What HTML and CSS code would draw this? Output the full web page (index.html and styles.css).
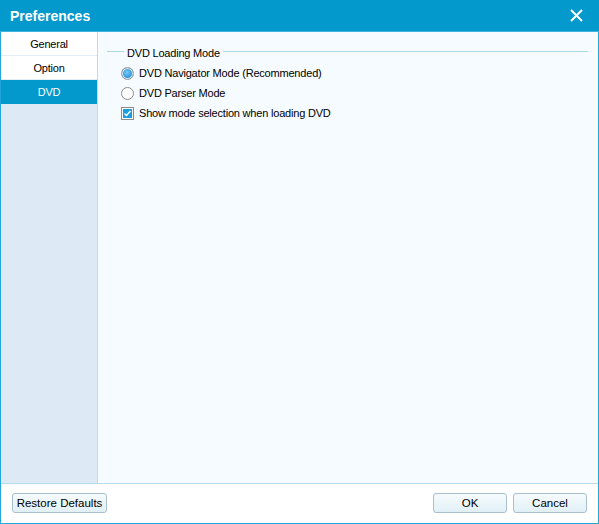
FILE: index.html
```html
<!DOCTYPE html>
<html>
<head>
<meta charset="utf-8">
<link rel="stylesheet" href="styles.css">
</head>
<body>
<div class="window">
  <div class="titlebar">
    <span class="title">Preferences</span>
    <svg class="close" width="13" height="13" viewBox="0 0 13 13"><path d="M1 1L12 12M12 1L1 12" stroke="#fff" stroke-width="2"/></svg>
  </div>
  <div class="main">
    <div class="sidebar">
      <div class="tab">General</div>
      <div class="tab">Option</div>
      <div class="tab active">DVD</div>
    </div>
    <div class="content">
      <div class="group">
        <div class="legend"><span class="legend-text">DVD Loading Mode</span></div>
        <div class="rows">
          <div class="row"><span class="radio checked"></span><span>DVD Navigator Mode (Recommended)</span></div>
          <div class="row"><span class="radio"></span><span>DVD Parser Mode</span></div>
          <div class="row"><span class="check"><svg width="9" height="9" viewBox="0 0 9 9"><path d="M1.5 4.5L3.5 6.5L7.5 2" stroke="#fff" stroke-width="1.5" fill="none"/></svg></span><span>Show mode selection when loading DVD</span></div>
        </div>
      </div>
    </div>
  </div>
  <div class="footer">
    <button class="btn restore">Restore Defaults</button>
    <div class="spacer"></div>
    <button class="btn">OK</button>
    <button class="btn">Cancel</button>
  </div>
</div>
</body>
</html>
```
FILE: styles.css
```css
html, body { margin: 0; padding: 0; }
body { width: 599px; height: 524px; font-family: "Liberation Sans", Arial, sans-serif; font-size: 11px; letter-spacing: -0.2px; color: #000; }
.window {
  width: 599px; height: 524px; box-sizing: border-box;
  border: 1px solid #22a6dc; border-top: none;
  display: flex; flex-direction: column; background: #fff;
}
.titlebar {
  height: 31px; flex: none; background: #0399cc;
  display: flex; align-items: center; justify-content: space-between;
  padding: 0 16px 0 10px; margin: 0 -1px;
  border-bottom: 1px solid #3db6e2;
}
.title { color: #fff; font-weight: bold; font-size: 14px; letter-spacing: 0; }
.close { display: block; }
.main { flex: 1; display: flex; min-height: 0; border-bottom: 1px solid #b4dcea; }
.sidebar { width: 96px; flex: none; background: #ddeaf6; border-right: 1px solid #c5d6e4; }
.tab {
  height: 23px; line-height: 25px; text-align: center; background: #fff;
  border-bottom: 1px solid #e2edf5;
}
.tab.active { background: #0399cc; color: #fff; border-bottom-color: #0399cc; }
.content { flex: 1; background: #f5fbff; padding: 12px 10px 0 9px; }
.group { display: flex; flex-direction: column; }
.legend { position: relative; height: 14px; display: flex; align-items: center; padding-top: 2px; }
.legend::before { content: ""; position: absolute; left: 0; right: 0; top: 7px; height: 1px; background: #a9d9e5; }
.legend-text { position: relative; margin-left: 17px; padding: 0 3px 0 3px; background: #f5fbff; }
.rows { margin-top: 3px; }
.row { height: 20px; display: flex; align-items: center; margin-left: 14px; }
.radio {
  width: 11px; height: 11px; border-radius: 50%; border: 1px solid #8c8c8c;
  background: #fff; margin-right: 5px; flex: none; box-sizing: content-box;
}
.radio.checked { background: radial-gradient(circle at 45% 40%, #7cc8f2 0, #1e8ed8 70%); border-color: #9a9a9a; box-shadow: inset 0 0 0 1px #dfe9f1; }
.check {
  width: 11px; height: 11px; border: 1px solid #8c8c8c; background: #1a9ee0;
  margin-right: 5px; flex: none; display: flex; align-items: center; justify-content: center;
  box-shadow: inset 0 0 0 1px #fff;
}
.check svg { display: block; }
.footer { height: 38px; flex: none; display: flex; align-items: center; padding: 0 11px 1px 11px; background: #fff; }
.spacer { flex: 1; }
.btn {
  font-family: "Liberation Sans", Arial, sans-serif; font-size: 11.5px; color: #000;
  height: 20px; width: 74px; margin-left: 6px; padding: 0;
  border: 1px solid #a8c0cc; border-radius: 3px;
  background: linear-gradient(#f6fbfd, #e1f0f6);
}
.btn.restore { width: 95px; margin-left: 0; }
```
